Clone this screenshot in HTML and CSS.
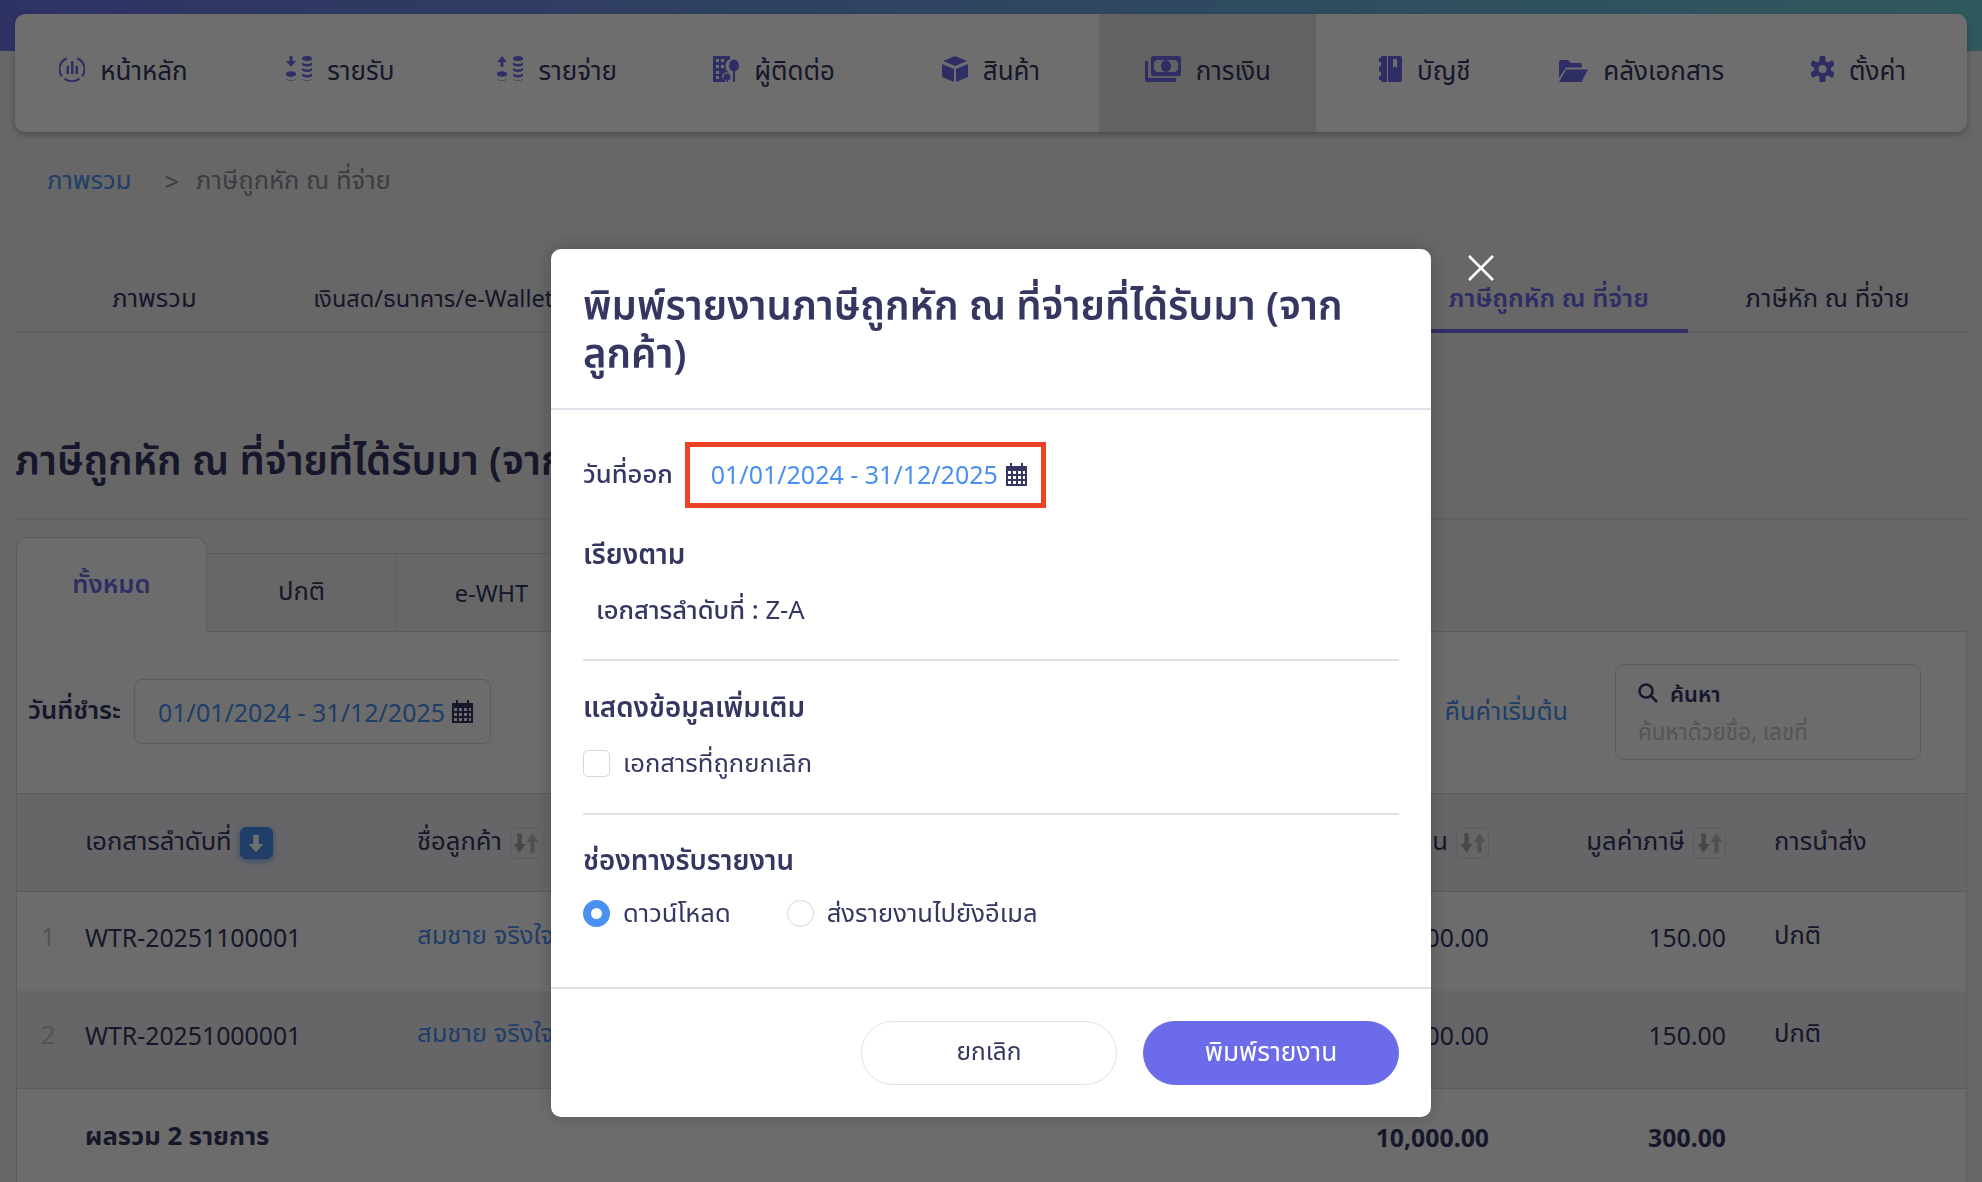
FILE: index.html
```html
<!DOCTYPE html>
<html lang="th">
<head>
<meta charset="utf-8">
<title>ภาษีถูกหัก ณ ที่จ่าย</title>
<link rel="stylesheet" href="styles.css">
</head>
<body>
<svg class="defs" width="0" height="0" aria-hidden="true">
  <defs>
    <symbol id="i-cal" viewBox="0 0 21 23">
      <path fill-rule="evenodd" d="M4 0h2v3H4zM15 0h2v3h-2zM0 3h21v20H0zM2 8v3h3V8zm5 0v3h3V8zm5 0v3h3V8zm5 0v3h2V8zM2 13v3h3v-3zm5 0v3h3v-3zm5 0v3h3v-3zm5 0v3h2v-3zM2 18v3h3v-3zm5 0v3h3v-3zm5 0v3h3v-3zm5 0v3h2v-3z"/>
    </symbol>
    <symbol id="i-sort" viewBox="0 0 24 24">
      <path d="M4 3h4v10h3.500L6 21 .5 13H4z"/><path d="M16 21h4V11h3.500L18 3l-5.500 8H16z" opacity=".7"/>
    </symbol>
    <symbol id="i-coins" viewBox="0 0 26 26">
      <ellipse cx="21" cy="2.500" rx="5" ry="2.500"/>
      <path d="M16 6.500q5 3 10 0v2.500q-5 3-10 0zM16 12q5 3 10 0v2.500q-5 3-10 0zM16 17.500q5 3 10 0v2.500q-5 3-10 0zM16 23q5 3 10 0v.500q-5 3-10 0z"/>
      <ellipse cx="5" cy="18" rx="5" ry="2.800"/>
      <path d="M0 23q5 3 10 0v.500q-5 3-10 0z"/>
    </symbol>
  </defs>
</svg>

<div class="page">
  <nav class="mainnav">
    <a class="navitem"><svg class="navicon" viewBox="0 0 26 26"><path d="M8 2.200a11.500 11.500 0 0 0-5 18M18 2.200a11.500 11.500 0 0 1 5 18M5.500 22.500a11.500 11.500 0 0 0 15 0" fill="none" stroke="currentColor" stroke-width="2.200"/><path d="M7.500 10h2.500v8H7.500zM12 5h2.500v13H12zM16.500 10H19v8h-2.500z"/></svg><span>หน้าหลัก</span></a>
    <a class="navitem"><svg class="navicon" viewBox="0 0 26 26"><use href="#i-coins"/><path d="M3.500 0h3v5H10l-5 6-5-6h3.500z"/></svg><span>รายรับ</span></a>
    <a class="navitem"><svg class="navicon" viewBox="0 0 26 26"><use href="#i-coins"/><path d="M3.500 11h3V6H10L5 0 0 6h3.500z"/></svg><span>รายจ่าย</span></a>
    <a class="navitem"><svg class="navicon" viewBox="0 0 26 26"><path fill-rule="evenodd" d="M0 0h17v3a8 8 0 0 0-.500 14A5 5 0 0 0 9 21l3 3v2H0zM3 3v3h3V3zm5 0v3h3V3zM3 9v3h3V9zm5 0v3h3V9zM3 15v3h3v-3zM3 20v3h3v-3z"/><ellipse cx="21" cy="9.500" rx="5" ry="6"/><path d="M20 14h2v12h-2z"/><circle cx="14" cy="21" r="3.500"/><path d="M13.300 23h1.500v3h-1.500z"/></svg><span>ผู้ติดต่อ</span></a>
    <a class="navitem"><svg class="navicon" viewBox="0 0 26 26"><path d="M13 0l12 5-12 5L1 5zM0 8l12 5v13L0 21zM26 8l-12 5v13l12-5z"/></svg><span>สินค้า</span></a>
    <a class="navitem is-active"><svg class="navicon money" viewBox="0 0 36 26"><path fill-rule="evenodd" d="M8 0h26a2 2 0 0 1 2 2v16a2 2 0 0 1-2 2H8a2 2 0 0 1-2-2V2a2 2 0 0 1 2-2zM11 4a2 2 0 0 1-2 2v8a2 2 0 0 1 2 2h20a2 2 0 0 1 2-2V6a2 2 0 0 1-2-2z"/><ellipse cx="21" cy="10" rx="5" ry="6"/><path d="M0 5h3v16a1 1 0 0 0 1 1h27v4H3a3 3 0 0 1-3-3z"/></svg><span>การเงิน</span></a>
    <a class="navitem"><svg class="navicon book" viewBox="0 0 23 26"><path fill-rule="evenodd" d="M9 0h12a2 2 0 0 1 2 2v22a2 2 0 0 1-2 2H9zM14 3v9l2-2 2 2V3z"/><path d="M3 0h5v26H3a1 1 0 0 1-1-1v-1H0v-4h2v-4.500H0v-5h2V6H0V2h2V1a1 1 0 0 1 1-1z"/></svg><span>บัญชี</span></a>
    <a class="navitem"><svg class="navicon folder" viewBox="0 0 29 22"><path d="M0 2a2 2 0 0 1 2-2h7l3 3h9a2 2 0 0 1 2 2v2.500H7L0 18z"/><path d="M7 9.500h22L22.500 22H0z"/></svg><span>คลังเอกสาร</span></a>
    <a class="navitem"><svg class="navicon book" viewBox="0 0 23 26"><g transform="translate(11.500 13)"><circle r="8.500"/><rect x="-3" y="-13" width="6" height="26" rx="1"/><rect x="-3" y="-13" width="6" height="26" rx="1" transform="rotate(60)"/><rect x="-3" y="-13" width="6" height="26" rx="1" transform="rotate(120)"/><circle r="4" fill="#fff"/></g></svg><span>ตั้งค่า</span></a>
  </nav>

  <div class="crumbs"><a class="link">ภาพรวม</a><span class="crumb-sep">&gt;</span><span class="crumb-cur">ภาษีถูกหัก ณ ที่จ่าย</span></div>

  <div class="toptabs">
    <a class="toptab">ภาพรวม</a>
    <a class="toptab toptab-long">เงินสด/ธนาคาร/e-Wallet</a>
    <a class="toptab"></a>
    <a class="toptab"></a>
    <a class="toptab"></a>
    <a class="toptab is-active">ภาษีถูกหัก ณ ที่จ่าย</a>
    <a class="toptab">ภาษีหัก ณ ที่จ่าย</a>
  </div>

  <h1 class="pagetitle">ภาษีถูกหัก ณ ที่จ่ายที่ได้รับมา (จากลูกค้า)</h1>

  <div class="subtabs">
    <a class="subtab is-active">ทั้งหมด</a>
    <a class="subtab">ปกติ</a>
    <a class="subtab subtab-latin">e-WHT</a>
    <span class="subtab-rest"></span>
  </div>

  <section class="card">
    <div class="filters">
      <b class="filter-label">วันที่ชำระ</b>
      <div class="datebox"><span class="link date-text">01/01/2024 - 31/12/2025</span><svg class="calicon"><use href="#i-cal"/></svg></div>
      <a class="link reset">คืนค่าเริ่มต้น</a>
      <div class="search">
        <div class="search-head"><svg class="searchicon" viewBox="0 0 20 20"><circle cx="8" cy="8" r="6.500" fill="none" stroke="currentColor" stroke-width="2.500"/><path d="M13 13l6 6" stroke="currentColor" stroke-width="2.500"/></svg><b>ค้นหา</b></div>
        <div class="search-ph">ค้นหาด้วยชื่อ, เลขที่</div>
      </div>
    </div>

    <div class="trow thead">
      <span></span>
      <span class="cell">เอกสารลำดับที่ <i class="sortbtn is-on"><svg viewBox="0 0 24 24"><path d="M9 3h6v10h5l-8 9-8-9h5z"/></svg></i></span>
      <span class="cell">ชื่อลูกค้า <i class="sortbtn"><svg><use href="#i-sort"/></svg></i></span>
      <span class="cell right">ยอดเงิน <i class="sortbtn"><svg><use href="#i-sort"/></svg></i></span>
      <span class="cell right">มูลค่าภาษี <i class="sortbtn"><svg><use href="#i-sort"/></svg></i></span>
      <span class="cell status">การนำส่ง</span>
    </div>
    <div class="trow tbody">
      <span class="num">1</span><span class="latin">WTR-20251100001</span><a class="link">สมชาย จริงใจ</a><span class="right latin">5,000.00</span><span class="right latin">150.00</span><span class="status">ปกติ</span>
    </div>
    <div class="trow tbody alt">
      <span class="num">2</span><span class="latin">WTR-20251000001</span><a class="link">สมชาย จริงใจ</a><span class="right latin">5,000.00</span><span class="right latin">150.00</span><span class="status">ปกติ</span>
    </div>
    <div class="trow tfoot">
      <span></span><b class="sumlabel">ผลรวม 2 รายการ</b><span></span><b class="right latin">10,000.00</b><b class="right latin">300.00</b><span></span>
    </div>
  </section>
</div>

<div class="overlay">
  <div class="modal">
    <button class="closebtn" aria-label="ปิด"><svg viewBox="0 0 28 26"><path d="M2 1l24 24M26 1L2 25" fill="none" stroke="currentColor" stroke-width="2.600"/></svg></button>
    <h2 class="modal-title">พิมพ์รายงานภาษีถูกหัก ณ ที่จ่ายที่ได้รับมา (จากลูกค้า)</h2>
    <div class="modal-body">
      <div class="daterow">
        <span class="daterow-label">วันที่ออก</span>
        <div class="datepick"><span class="datepick-text date-text">01/01/2024 - 31/12/2025</span><svg class="calicon"><use href="#i-cal"/></svg></div>
      </div>
      <h3 class="sect-title sort-title">เรียงตาม</h3>
      <p class="sort-line"><span class="medium">เอกสารลำดับที่ :</span> Z-A</p>
      <hr class="rule">
      <h3 class="sect-title">แสดงข้อมูลเพิ่มเติม</h3>
      <label class="opt check-opt"><span class="checkbox"></span>เอกสารที่ถูกยกเลิก</label>
      <hr class="rule">
      <h3 class="sect-title channel-title">ช่องทางรับรายงาน</h3>
      <div class="radios">
        <label class="opt"><span class="radio is-on"></span>ดาวน์โหลด</label>
        <label class="opt"><span class="radio"></span>ส่งรายงานไปยังอีเมล</label>
      </div>
    </div>
    <div class="modal-foot">
      <button class="btn btn-ghost">ยกเลิก</button>
      <button class="btn btn-primary">พิมพ์รายงาน</button>
    </div>
  </div>
</div>
</body>
</html>
```

FILE: styles.css
```css
* { box-sizing: border-box; }
html, body { margin: 0; height: 100%; }
body {
  height: 1182px;
  overflow: hidden;
  font-family: "Noto Sans", "Noto Sans Thai", "Liberation Sans", sans-serif;
  font-size: 25.600px;
  color: #353761;
  background: #eeeef2;
}
.defs { position: absolute; }
a { color: inherit; text-decoration: none; }
.link { color: #4a90f0; }
.latin { font-size: 24.800px; }
.date-text { font-size: 25px; }

.page {
  height: 1182px;
  padding: 14px 15px 0;
  background: linear-gradient(90deg, #6d76e8, #6fcfd8) top / 100% 51px no-repeat;
}

/* main nav */
.mainnav {
  display: grid;
  grid-template-columns: repeat(9, 1fr);
  height: 118px;
  background: #fff;
  border-radius: 10px;
  box-shadow: 0 3px 6px rgba(0, 0, 0, .25);
  overflow: hidden;
}
.navitem {
  display: flex;
  justify-content: center;
  align-items: flex-start;
  gap: 15px;
  padding-top: 35px;
  font-size: 26px;
  line-height: 42px;
  color: #353761;
}
.navitem.is-active { background: #e4e4e6; }
.navicon { width: 26px; height: 26px; margin-top: 7px; fill: #6c6cea; color: #6c6cea; flex: none; }
.navicon.money { width: 36px; }
.navicon.book { width: 23px; }
.navicon.folder { width: 29px; height: 22px; margin-top: 11px; }

/* breadcrumb */
.crumbs {
  display: flex;
  align-items: center;
  height: 40px;
  margin: 29px 0 0 32px;
}
.crumbs .link { color: #4a90f0; }
.crumb-sep { margin: 0 17px 0 33px; color: #8c8c96; }
.crumb-cur { color: #8c8c96; }

/* top tabs */
.toptabs {
  display: grid;
  grid-template-columns: repeat(7, 1fr);
  height: 75px;
  margin-top: 57px;
  border-bottom: 2px solid #dcdce4;
}
.toptab {
  display: flex;
  justify-content: center;
  padding-top: 19px;
  line-height: 42px;
  white-space: nowrap;
  height: 75px;
}
.toptab-long { font-size: 23.500px; }
.toptab.is-active {
  color: #6c6cea;
  font-weight: 600;
  border-bottom: 4px solid #6c6cea;
}

/* heading */
.pagetitle {
  margin: 0;
  height: 187px;
  padding-top: 100px;
  font-size: 40px;
  line-height: 54px;
  font-weight: 600;
  white-space: nowrap;
  border-bottom: 2px solid #dcdce4;
}

/* sub tabs */
.subtabs {
  display: flex;
  align-items: flex-end;
  height: 95px;
  margin-top: 17px;
}
.subtab {
  width: 190px;
  height: 79px;
  display: flex;
  justify-content: center;
  align-items: center;
  border: solid #d6d6de;
  border-width: 1px 1px 1px 0;
}
.subtab-latin { font-size: 23.600px; }
.subtab.is-active {
  width: 191px;
  height: 95px;
  margin-left: 1px;
  color: #6c6cea;
  font-weight: 600;
  background: #fafafc;
  border-width: 1px 1px 0 1px;
  border-radius: 12px 12px 0 0;
}
.subtab-rest { flex: 1; border-bottom: 1px solid #d6d6de; }

/* card */
.card {
  height: 600px;
  margin-left: 1px;
  background: #fafafc;
  border: solid #d6d6de;
  border-width: 0 1px;
}
.filters {
  display: flex;
  align-items: center;
  height: 161px;
  padding-bottom: 2px;
}
.filter-label { margin-left: 11px; font-weight: 600; }
.datebox {
  display: flex;
  align-items: center;
  gap: 7px;
  height: 65px;
  width: 357px;
  margin-left: 13px;
  padding-left: 23px;
  border: 1px solid #d6d6de;
  border-radius: 8px;
  white-space: nowrap;
}
.calicon { width: 21px; height: 23px; fill: #353761; flex: none; }
.reset { margin-left: auto; font-size: 25.300px; }
.search {
  width: 306px;
  height: 96px;
  margin: 0 45px 0 47px;
  padding: 10px 22px;
  border: 1px solid #d6d6de;
  border-radius: 8px;
}
.search-head { display: flex; align-items: center; gap: 12px; font-size: 22px; line-height: 36px; }
.search-head b { font-weight: 600; }
.searchicon { width: 20px; height: 20px; color: #353761; }
.search-ph { margin-top: 3px; font-size: 22.400px; line-height: 36px; color: #c4c4cc; }

/* table */
.trow {
  display: grid;
  grid-template-columns: 68px 332px 1fr 389px 237px 240px;
  align-items: center;
}
.thead { height: 99px; background: #edecf0; border-top: 1px solid #d6d6de; border-bottom: 1px solid #d6d6de; }
.tbody { height: 99px; padding-bottom: 10px; }
.tbody.alt { background: #edecf0; height: 98px; border-bottom: 1px solid #d6d6de; }
.tfoot { height: 96px; }
.tfoot b { font-weight: 700; }
.cell { display: flex; align-items: center; gap: 8px; }
.right { text-align: right; justify-content: flex-end; }
.status { padding-left: 48px; }
.num { padding-left: 24px; color: #c4c4c4; }
.sortbtn {
  display: inline-flex;
  align-items: center;
  justify-content: center;
  width: 33px;
  height: 32px;
  border: 1px solid #d6d6de;
  border-radius: 6px;
}
.sortbtn svg { width: 28px; height: 26px; fill: #a8a8a8; }
.sortbtn.is-on { background: #4a90f0; border-color: #4a90f0; box-shadow: 0 2px 6px rgba(74, 144, 240, .7); }
.sortbtn.is-on svg { fill: #fff; width: 22px; height: 22px; }
.sumlabel { white-space: nowrap; }

/* modal */
.overlay {
  position: fixed;
  inset: 0;
  display: flex;
  justify-content: center;
  align-items: flex-start;
  padding-top: 249px;
  background: rgba(0, 0, 0, .57);
}
.modal {
  position: relative;
  width: 880px;
  height: 868px;
  background: #fff;
  border-radius: 10px;
  box-shadow: 0 0 20px rgba(0, 0, 0, .2);
}
.closebtn {
  position: absolute;
  top: 6px;
  right: -64px;
  width: 28px;
  height: 26px;
  padding: 0;
  border: 0;
  background: none;
  color: #fff;
}
.closebtn svg { display: block; width: 28px; height: 26px; }
.modal-title {
  margin: 0;
  height: 161px;
  padding: 32px 32px 0;
  font-size: 40px;
  line-height: 48px;
  font-weight: 600;
  border-bottom: 2px solid #e0e0e8;
}
.modal-body { height: 579px; padding: 32px 32px 0; border-bottom: 2px solid #e0e0e8; }
.daterow { display: flex; align-items: center; gap: 12px; }
.daterow-label { font-weight: 500; }
.datepick {
  display: flex;
  align-items: center;
  gap: 8px;
  width: 361px;
  height: 66px;
  padding: 0 0 2px 21px;
  border: 5px solid #ec4326;
  white-space: nowrap;
}
.datepick-text { color: #4a90f0; }
.sect-title { margin: 0; font-size: 27.700px; line-height: 42px; font-weight: 600; }
.sort-title { margin-top: 24px; }
.channel-title { margin-top: -1px; }
.sort-line { margin: 15px 0 -1px 13px; line-height: 42px; }
.medium { font-weight: 500; }
.rule { margin: 29px 0 24px; border: 0; border-top: 2px solid #e0e0e8; }
.opt { display: flex; align-items: center; gap: 13px; line-height: 42px; white-space: nowrap; }
.check-opt { margin-top: 15px; }
.checkbox { width: 27px; height: 27px; border: 1px solid #d6d6de; border-radius: 5px; flex: none; }
.radios { display: flex; gap: 56px; margin-top: 12px; }
.radio { width: 27px; height: 27px; border: 1px solid #d6d6de; border-radius: 50%; flex: none; }
.radio.is-on { border: 8px solid #4a90f0; }
.modal-foot { display: flex; justify-content: flex-end; gap: 26px; padding: 32px 32px 0; }
.btn {
  width: 256px;
  height: 64px;
  padding-bottom: 2px;
  border-radius: 32px;
  font: inherit;
  font-size: 24.500px;
  color: #353761;
  background: #fff;
  border: 1px solid #e0e0e8;
}
.btn-primary { color: #fff; background: #6c6cea; border-color: #6c6cea; font-size: 26.300px; }
```
